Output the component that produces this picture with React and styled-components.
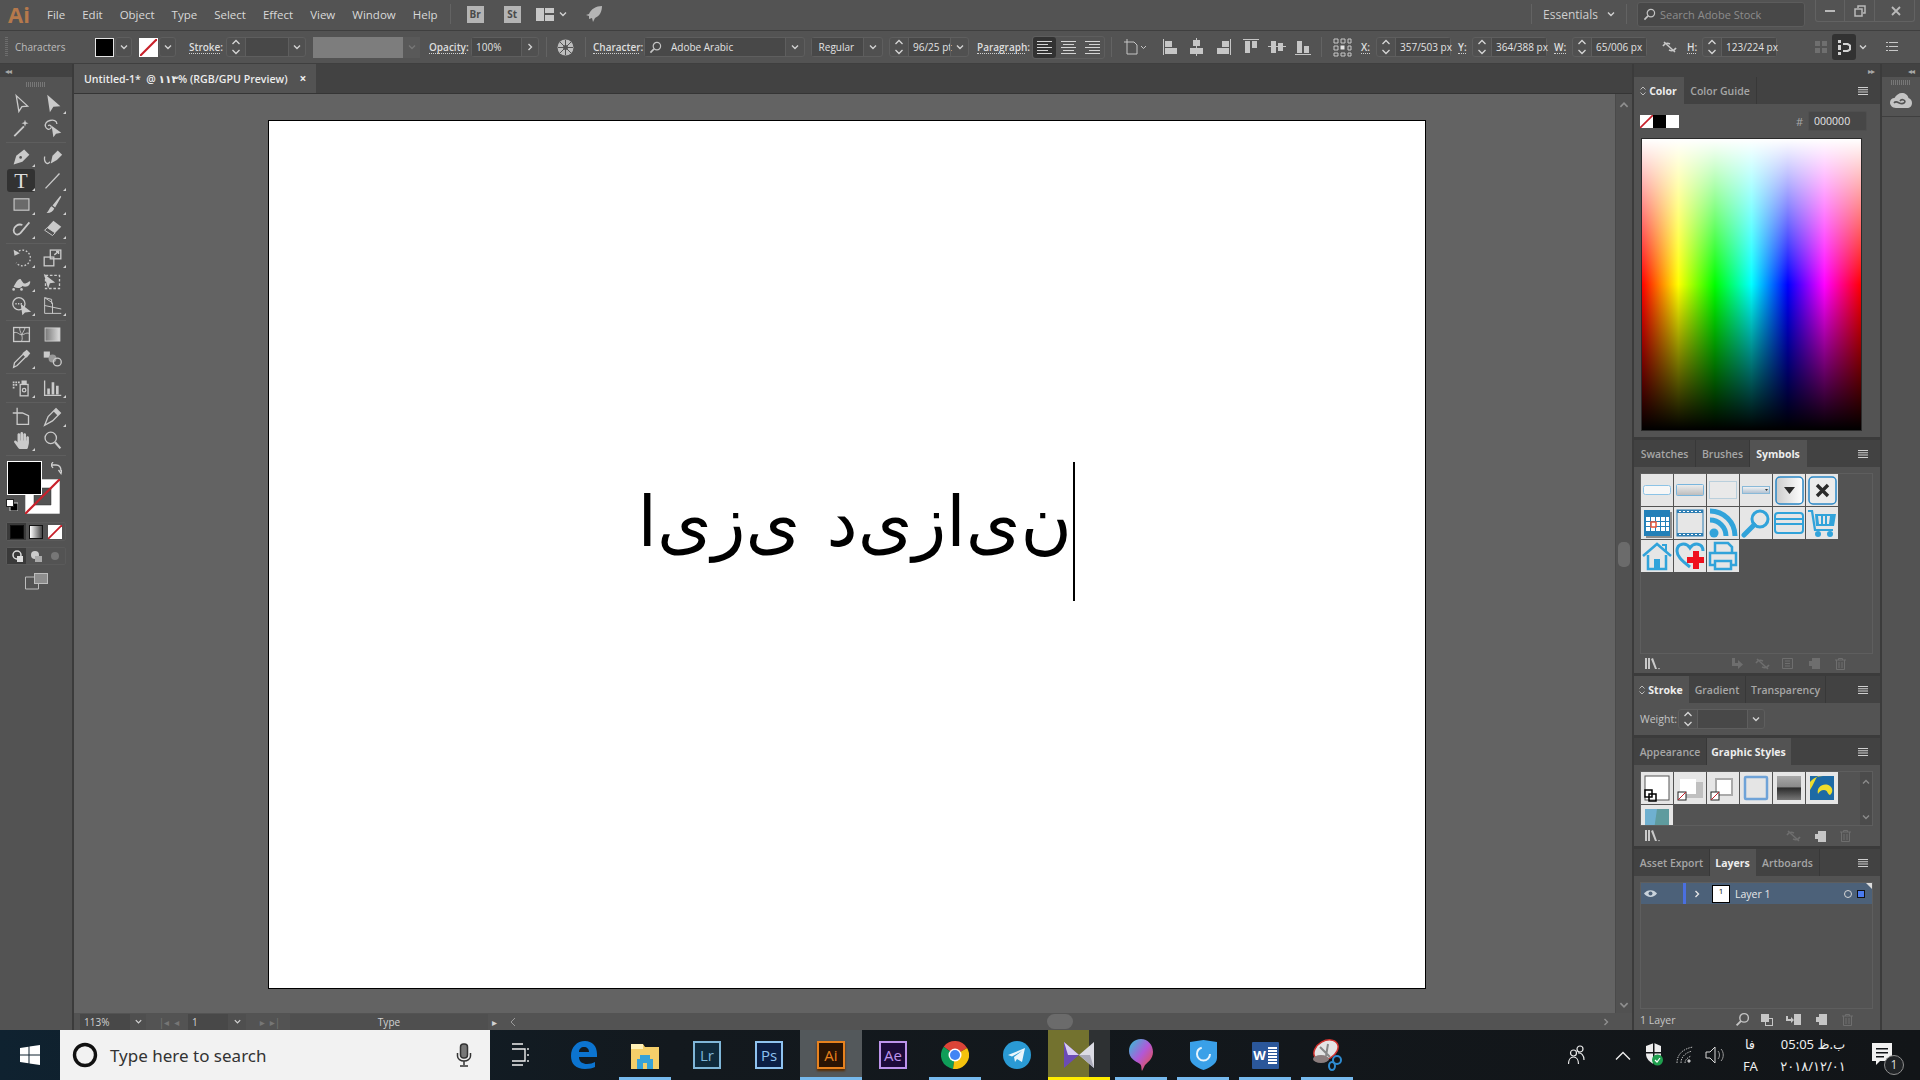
import React from 'react';
import styled, { createGlobalStyle } from 'styled-components';
import { FaHandPaper } from 'react-icons/fa';

const UI_FONT = '"Open Sans", "DejaVu Sans", sans-serif';

const GlobalStyle = createGlobalStyle`
  html, body { margin: 0; padding: 0; background: #535353; overflow: hidden; }
  * { box-sizing: border-box; }
  svg { display: block; flex: none; }
`;

const Page = styled.div`
  width: 1920px;
  height: 1080px;
  display: flex;
  flex-direction: column;
  font-family: ${UI_FONT};
  color: #d6d6d6;
  overflow: hidden;
`;

/* ---------- menu bar ---------- */
const MenuBar = styled.header`
  height: 30px;
  display: flex;
  align-items: center;
  padding-bottom: 2px;
  background: #535353;
`;
const AiLogo = styled.span`
  margin-left: 8px;
  width: 39px;
  font: 700 22px "Open Sans", sans-serif;
  color: #b5794c;
`;
const MenuList = styled.nav`
  display: flex;
  gap: 17px;
  font-size: 11.5px;
  color: #d9d9d9;
`;
const VSep = styled.div`
  width: 1px;
  height: 20px;
  margin-left: ${p => p.$ml || 0}px;
  background: #636363;
`;
const AppTile = styled.div`
  width: 17px;
  height: 17px;
  margin-left: ${p => p.$ml}px;
  background: #b4b4b4;
  color: #4a4a4a;
  font-size: 10px;
  font-weight: 700;
  display: flex;
  align-items: center;
  justify-content: center;
`;
const Workspace = styled.div`
  margin-left: auto;
  display: flex;
  align-items: center;
  height: 100%;
`;
const Essentials = styled.span`
  margin-left: 11px;
  font-size: 12px;
  color: #cfcfcf;
`;
const StockSearch = styled.div`
  width: 168px;
  height: 25px;
  margin-left: 10px;
  display: flex;
  align-items: center;
  gap: 4px;
  padding-left: 5px;
  border-radius: 3px;
  background: #484848;
  border: 1px solid #5c5c5c;
  font-size: 11px;
  color: #8d8d8d;
`;
const WinButtons = styled.div`
  margin: -6px 5px 0 10px;
  width: 100px;
  height: 22px;
  display: grid;
  grid-template-columns: 28px 30px 42px;
  border: 1px solid #626262;
  border-top: 0;
  border-radius: 0 0 3px 3px;
  color: #b9b9b9;
  & > div { display: flex; align-items: center; justify-content: center; }
  & > div + div { border-left: 1px solid #626262; }
`;

/* ---------- control bar ---------- */
const ControlBar = styled.div`
  height: 34px;
  display: flex;
  align-items: center;
  background: #535353;
  border-top: 1px solid #3f3f3f;
  border-bottom: 1px solid #3f3f3f;
  font-size: 10px;
  color: #d2d2d2;
`;
const Grip = styled.div`
  width: 3px;
  height: 20px;
  margin-left: 5px;
  background: repeating-linear-gradient(180deg, #6d6d6d 0 1px, transparent 1px 2px);
`;
const PlainLabel = styled.span`
  margin-left: ${p => p.$ml || 0}px;
  width: ${p => p.$w}px;
  white-space: nowrap;
  color: #bdbdbd;
`;
const LinkLabel = styled.span`
  margin-left: ${p => p.$ml || 0}px;
  width: ${p => p.$w}px;
  white-space: nowrap;
  line-height: 12px;
  font-weight: 600;
  color: #dedede;
  border-bottom: 1px dotted #d0d0d0;
`;
const Swatch = styled.div`
  width: 19px;
  height: 19px;
  margin-left: ${p => p.$ml || 0}px;
  background: ${p => p.$none ? '#fff' : '#000'};
  border: 1px solid ${p => p.$none ? '#fff' : '#e4e4e4'};
  overflow: hidden;
`;
const Combo = styled.div`
  display: flex;
  height: 20px;
  margin-left: ${p => p.$ml || 0}px;
  background: #505050;
  border: 1px solid #5e5e5e;
  border-radius: 3px;
`;
const ComboCell = styled.div`
  width: ${p => p.$w}px;
  height: 100%;
  display: flex;
  align-items: center;
  justify-content: ${p => p.$text ? 'flex-start' : 'center'};
  padding-left: ${p => p.$text ? 4 : 0}px;
  white-space: nowrap;
  background: ${p => p.$text ? '#484848' : 'transparent'};
  color: #e2e2e2;
  & + & { border-left: 1px solid #5e5e5e; }
`;
const FontName = styled.span`
  margin-left: 9px;
`;
const GrayField = styled.div`
  width: 90px;
  height: 21px;
  margin-left: 7px;
  background: #7d7d7d;
`;
const DisabledDrop = styled.div`
  width: 17px;
  height: 21px;
  background: #595959;
  display: flex;
  align-items: center;
  justify-content: center;
`;
const IconSlot = styled.div`
  margin-left: ${p => p.$ml || 0}px;
  width: ${p => p.$w}px;
  height: ${p => p.$h || 20}px;
  display: flex;
  align-items: center;
  justify-content: center;
  color: #c8c8c8;
  background: ${p => p.$on ? '#323232' : 'transparent'};
  border-radius: ${p => p.$on ? 3 : 0}px;
`;
const ButtonSet = styled.div`
  margin-left: ${p => p.$ml}px;
  display: flex;
  height: 23px;
  border: 1px solid #5e5e5e;
  border-radius: 3px;
`;

/* ---------- middle ---------- */
const Middle = styled.div`
  height: 966px;
  display: flex;
  background: #3b3b3b;
`;
const Toolbox = styled.aside`
  width: 72px;
  background: #535353;
  display: flex;
  flex-direction: column;
  flex: none;
`;
const CollapseStrip = styled.div`
  height: 13px;
  background: #424242;
  color: #a8a8a8;
  display: flex;
  align-items: center;
  padding: 0 ${p => p.$pad || 5}px;
  justify-content: ${p => p.$end ? 'flex-end' : 'flex-start'};
  font-size: 8px;
  letter-spacing: -1px;
`;
const HGrip = styled.div`
  width: 20px;
  height: 5px;
  margin: ${p => p.$m || '5px auto 3px'};
  background: repeating-linear-gradient(90deg, #777 0 1px, transparent 1px 2px);
`;
const ToolGroup = styled.div`
  margin: 0 6px;
  padding: 2px 0;
  display: grid;
  grid-template-columns: 31px 31px;
  grid-auto-rows: 24px;
  border-bottom: 1px solid #5e5e5e;
`;
const ToolCell = styled.div`
  position: relative;
  width: 28px;
  height: 23px;
  margin-left: 1px;
  display: flex;
  align-items: center;
  justify-content: center;
  border-radius: 3px;
  background: ${p => p.$on ? '#323232' : 'transparent'};
  color: #cacaca;
  &::after {
    content: ${p => p.$more ? "''" : 'none'};
    position: absolute;
    right: 0;
    bottom: 1px;
    border-left: 3px solid transparent;
    border-bottom: 3px solid #d0d0d0;
  }
`;
const TypeGlyph = styled.span`
  font: 400 22px "Liberation Serif", serif;
  color: #dcdcdc;
  line-height: 1;
`;
const ColorWell = styled.div`
  position: relative;
  height: 55px;
  margin-top: 5px;
`;
const FillBox = styled.div`
  position: absolute;
  left: 7px;
  top: 0;
  width: 35px;
  height: 34px;
  background: #000;
  border: 1px solid #fff;
  z-index: 1;
`;
const StrokeBox = styled.div`
  position: absolute;
  left: 25px;
  top: 18px;
  width: 35px;
  height: 35px;
`;
const SwapIcon = styled.div`
  position: absolute;
  left: 51px;
  top: 1px;
  color: #cfcfcf;
`;
const DefaultIcon = styled.div`
  position: absolute;
  left: 6px;
  top: 38px;
`;
const ModeRow = styled.div`
  height: ${p => p.$h}px;
  margin: ${p => p.$m};
  display: flex;
  border: 1px solid #5a5a5a;
  border-radius: 2px;
`;
const ModeCell = styled.div`
  flex: 1;
  display: flex;
  align-items: center;
  justify-content: center;
  background: ${p => p.$on ? '#3a3a3a' : 'transparent'};
`;
const ScreenMode = styled.div`
  margin: 8px 0 0 25px;
  color: #bdbdbd;
`;
const GradSquare = styled.div`
  width: 14px;
  height: 14px;
  border: 1px solid #111;
  background: ${p => p.$bg};
`;

const Center = styled.main`
  width: 1558px;
  margin-left: 2px;
  display: flex;
  flex-direction: column;
  flex: none;
`;
const TabBar = styled.div`
  height: 30px;
  background: #424242;
  border-bottom: 1px solid #353535;
  flex: none;
`;
const DocTab = styled.div`
  width: 242px;
  height: 29px;
  background: #535353;
  padding-left: 10px;
  display: flex;
  align-items: center;
  font-size: 10.6px;
  font-weight: 600;
  color: #ececec;
  white-space: pre;
`;
const TabClose = styled.span`
  margin-left: 12px;
  font-size: 12px;
  font-weight: 700;
`;
const CanvasRow = styled.div`
  flex: 1;
  display: flex;
  min-height: 0;
`;
const Canvas = styled.div`
  flex: 1;
  background: #636363;
  padding: 26px 0 0 194px;
`;
const Artboard = styled.div`
  width: 1158px;
  height: 869px;
  background: #fff;
  border: 1px solid #000;
  padding: 341px 0 0 371px;
`;
const TypeLine = styled.div`
  width: 435px;
  height: 139px;
  border-right: 2px solid #000;
  display: flex;
  align-items: center;
  justify-content: flex-end;
  padding: 0 1px 20px 0;
`;
const ArabicText = styled.div`
  direction: rtl;
  font: 400 70px "DejaVu Sans", sans-serif;
  word-spacing: 4px;
  white-space: nowrap;
  color: #000;
`;
const VScroll = styled.div`
  width: 17px;
  background: #515151;
  border-left: 1px solid #4a4a4a;
  padding-top: 5px;
  display: flex;
  flex-direction: column;
  align-items: center;
  color: #878787;
`;
const VThumb = styled.div`
  width: 12px;
  height: 25px;
  margin: 431px 0 432px;
  border-radius: 5px;
  background: #6b6b6b;
`;
const StatusBar = styled.footer`
  height: 17px;
  flex: none;
  display: flex;
  align-items: center;
  background: #535353;
  font-size: 10px;
  color: #cfcfcf;
`;
const StatusField = styled.div`
  width: ${p => p.$w}px;
  margin-left: ${p => p.$ml || 0}px;
  height: 16px;
  display: flex;
  align-items: center;
  padding-left: ${p => p.$pl || 0}px;
  justify-content: ${p => p.$mid ? 'center' : 'flex-start'};
  background: ${p => p.$bg || 'transparent'};
  color: ${p => p.$dim ? '#767676' : '#d2d2d2'};
`;
const HThumb = styled.div`
  width: 26px;
  height: 15px;
  margin-left: ${p => p.$ml}px;
  border-radius: 8px;
  background: #6b6b6b;
`;

/* ---------- right dock ---------- */
const Dock = styled.aside`
  flex: 1;
  display: flex;
  padding-left: 2px;
`;
const DockColumn = styled.div`
  width: 246px;
  display: flex;
  flex-direction: column;
`;
const Panel = styled.section`
  height: ${p => p.$h}px;
  margin-bottom: 3px;
  background: #535353;
  display: flex;
  flex-direction: column;
  flex: none;
  &:last-child { margin-bottom: 0; }
`;
const PanelHead = styled.div`
  height: 27px;
  display: flex;
  background: #424242;
  flex: none;
`;
const PanelTab = styled.div`
  width: ${p => p.$w}px;
  display: flex;
  align-items: center;
  justify-content: center;
  gap: 3px;
  font-size: 10.5px;
  white-space: nowrap;
  font-weight: ${p => p.$on ? 700 : 600};
  color: ${p => p.$on ? '#ededed' : '#a6a6a6'};
  background: ${p => p.$on ? '#535353' : 'transparent'};
  border-right: 1px solid ${p => p.$on ? '#535353' : '#383838'};
`;
const PanelMenu = styled.div`
  margin-left: auto;
  width: 22px;
  display: flex;
  align-items: center;
  color: #cfcfcf;
`;
const ColorTop = styled.div`
  height: 34px;
  display: flex;
  align-items: center;
  padding-left: 6px;
`;
const MiniSwatch = styled.div`
  width: 13px;
  height: 13px;
  background: ${p => p.$bg};
  overflow: hidden;
`;
const HexMark = styled.span`
  margin-left: 117px;
  font-size: 11px;
  color: #a9a9a9;
`;
const HexField = styled.div`
  width: 59px;
  height: 20px;
  margin-left: 5px;
  padding-left: 5px;
  border-radius: 2px;
  background: #474747;
  border: 1px solid #4f4f4f;
  font-size: 10.5px;
  color: #e6e6e6;
  display: flex;
  align-items: center;
`;
const Spectrum = styled.div`
  width: 221px;
  height: 293px;
  margin-left: 7px;
  border: 1px solid #2b2b2b;
  background:
    linear-gradient(180deg, #fff 0%, rgba(255, 255, 255, 0) 50%, rgba(0, 0, 0, 0) 50%, #000 100%),
    linear-gradient(90deg, #f00 0%, #ff0 16.6%, #0f0 33.3%, #0ff 50%, #00f 66.6%, #f0f 83.3%, #f00 100%);
`;
const ListBox = styled.div`
  width: 233px;
  height: ${p => p.$h}px;
  margin: ${p => p.$mt}px 0 0 6px;
  border: 1px solid #5e5e5e;
  flex: none;
  position: relative;
  overflow: hidden;
`;
const ThumbGrid = styled.div`
  display: grid;
  grid-template-columns: repeat(6, 32px);
  grid-auto-rows: 32px;
  gap: 1px;
  width: 200px;
`;
const Thumb = styled.div`
  background: #e6e6e6;
  display: flex;
  align-items: center;
  justify-content: center;
`;
const PanelFoot = styled.div`
  height: ${p => p.$h || 20}px;
  display: flex;
  align-items: center;
  padding: 0 6px 0 11px;
  color: #c6c6c6;
  font-size: 10.5px;
  flex: none;
`;
const FootIcon = styled.div`
  margin-left: ${p => p.$ml}px;
  color: ${p => p.$dim ? '#6e6e6e' : '#c6c6c6'};
`;
const WeightRow = styled.div`
  flex: 1;
  display: flex;
  align-items: center;
  padding-left: 6px;
  font-size: 10.5px;
  color: #c4c4c4;
`;
const StyleScroll = styled.div`
  position: absolute;
  right: 0;
  top: 0;
  bottom: 0;
  width: 12px;
  background: #4b4b4b;
  color: #8b8b8b;
  display: flex;
  flex-direction: column;
  justify-content: space-between;
  align-items: center;
  padding: 5px 0 3px;
`;
const LayerRow = styled.div`
  height: 21px;
  background: #4c6179;
  display: flex;
  align-items: center;
  position: relative;
  font-size: 10.5px;
  color: #e8e8e8;
  &::after {
    content: '';
    position: absolute;
    right: 0;
    top: 0;
    border-left: 6px solid transparent;
    border-top: 6px solid #dcdcdc;
  }
`;
const LayerBar = styled.div`
  width: 3px;
  height: 100%;
  margin-left: 26px;
  background: #4a6fe0;
`;
const LayerThumb = styled.div`
  width: 18px;
  height: 18px;
  margin: 0 5px 0 10px;
  background: #fff;
  border: 1px solid #000;
  color: #000;
  font-size: 8px;
  text-align: center;
  line-height: 9px;
`;
const LayerName = styled.span`
  width: 32px;
  white-space: nowrap;
`;
const LayerCount = styled.span`
  width: 34px;
  margin-left: -5px;
  white-space: nowrap;
`;
const LayerDot = styled.div`
  width: 8px;
  height: 8px;
  margin-left: 77px;
  border-radius: 50%;
  border: 1px solid #d6d6d6;
`;
const LayerSquare = styled.div`
  width: 8px;
  height: 8px;
  margin-left: 5px;
  background: #4a7bef;
  border: 1px solid #111;
`;
const IconStrip = styled.div`
  flex: 1;
  margin-left: 2px;
  background: #535353;
  display: flex;
  flex-direction: column;
`;
const StripButton = styled.div`
  height: 40px;
  display: flex;
  flex-direction: column;
  align-items: center;
  border-bottom: 1px solid #3f3f3f;
`;

/* ---------- taskbar ---------- */
const Taskbar = styled.footer`
  height: 50px;
  display: flex;
  flex: none;
  background: linear-gradient(90deg, #0f2230 0%, #13191e 35%, #121518 100%);
  color: #e8e8e8;
`;
const StartButton = styled.div`
  width: 60px;
  display: flex;
  align-items: center;
  justify-content: center;
`;
const SearchBox = styled.div`
  width: 430px;
  display: flex;
  align-items: center;
  padding-left: 12px;
  background: #f2f2f2;
  color: #333;
  font: 400 17px "Noto Sans", sans-serif;
`;
const SearchText = styled.span`
  margin-left: 12px;
  width: 346px;
`;
const TaskSlot = styled.div`
  position: relative;
  width: 62px;
  display: flex;
  align-items: center;
  justify-content: center;
  background: ${p => p.$bg || 'transparent'};
  &::after {
    content: ${p => p.$line ? "''" : 'none'};
    position: absolute;
    left: ${p => p.$full ? 0 : 5}px;
    right: ${p => p.$full ? 0 : 5}px;
    bottom: 0;
    height: 3px;
    background: ${p => p.$line};
  }
`;
const AdobeTile = styled.div`
  width: 28px;
  height: 28px;
  display: flex;
  align-items: center;
  justify-content: center;
  font: 400 15px "Open Sans", sans-serif;
  border: 2px solid ${p => p.$c};
  color: ${p => p.$c};
  background: ${p => p.$bg};
  box-shadow: ${p => p.$glow ? '0 2px 2px #5a2c00' : 'none'};
`;
const WordIcon = styled.div`
  width: 27px;
  height: 27px;
  display: flex;
  align-items: center;
  background: #2b579a;
  border-radius: 1px;
`;
const WordLetter = styled.span`
  width: 16px;
  font: 700 13px "Open Sans", sans-serif;
  color: #fff;
  text-align: center;
`;
const Tray = styled.div`
  margin-left: auto;
  display: flex;
  align-items: center;
  color: #e4e4e4;
`;
const TrayItem = styled.div`
  margin-left: ${p => p.$ml}px;
`;
const ClockColumn = styled.div`
  margin-left: ${p => p.$ml}px;
  width: ${p => p.$w}px;
  display: flex;
  flex-direction: column;
  gap: 2px;
  direction: ltr;
  font: 400 13px/20px "Noto Sans", "DejaVu Sans", sans-serif;
  color: #eee;
  white-space: nowrap;
  text-align: center;
`;
const NotifyButton = styled.div`
  position: relative;
  margin: 0 28px 0 22px;
`;
const NotifyBadge = styled.div`
  position: absolute;
  right: -12px;
  bottom: -8px;
  width: 20px;
  height: 20px;
  border-radius: 50%;
  border: 1px solid #8f8f8f;
  background: #202326;
  color: #ddd;
  font-size: 12px;
  line-height: 18px;
  text-align: center;
`;

/* ---------- small drawings ---------- */
const Chevron = ({ up, c = '#d2d2d2', s = 10 }) => (
  <svg width={s} height={s} viewBox="0 0 10 10" fill="none" stroke={c} strokeWidth="1.4">
    <path d={up ? 'M2 6.5 5 3.5 8 6.5' : 'M2 3.5 5 6.5 8 3.5'} />
  </svg>
);
const ChevronRight = ({ c = '#d2d2d2', s = 10 }) => (
  <svg width={s} height={s} viewBox="0 0 10 10" fill="none" stroke={c} strokeWidth="1.4">
    <path d="M3.5 2 6.5 5 3.5 8" />
  </svg>
);
const SpinArrows = () => (
  <svg width="10" height="16" viewBox="0 0 10 16" fill="none" stroke="#d6d6d6" strokeWidth="1.3">
    <path d="M1.5 5 5 1.5 8.5 5M1.5 11 5 14.5 8.5 11" />
  </svg>
);
const Burger = () => (
  <svg width="10" height="8" viewBox="0 0 10 8" fill="currentColor">
    <path d="M0 0h10v1H0zM0 2.3h10v1H0zM0 4.6h10v1H0zM0 7h10v1H0z" />
  </svg>
);
const NoneSlash = ({ s = 19 }) => (
  <svg width={s} height={s} viewBox="0 0 19 19">
    <rect width="19" height="19" fill="#fff" />
    <path d="M0 19 19 0" stroke="#c8202a" strokeWidth="2.4" />
  </svg>
);
const Magnifier = ({ s = 14, c = '#c4c4c4' }) => (
  <svg width={s} height={s} viewBox="0 0 14 14" fill="none" stroke={c} strokeWidth="1.3">
    <circle cx="8.5" cy="5.5" r="4" />
    <path d="M5.5 8.5 1.5 12.5" strokeWidth="1.8" />
  </svg>
);
const TextLines = ({ kind }) => {
  const rows = [0, 1, 2, 3, 4].map(i => {
    const w = i % 2 ? 11 : 15;
    const x = kind === 'left' ? 0 : kind === 'center' ? (15 - w) / 2 : 15 - w;
    return <rect key={i} x={x} y={i * 3} width={w} height="1" />;
  });
  return <svg width="15" height="13" viewBox="0 0 15 13" fill="#d4d4d4">{rows}</svg>;
};
const AlignIcon = ({ d }) => (
  <svg width="18" height="18" viewBox="0 0 18 18" fill="#c6c6c6"><path d={d} /></svg>
);

const T = ({ children, s = 21 }) => (
  <svg width={s} height={s} viewBox="0 0 24 24" fill="currentColor" stroke="none">{children}</svg>
);
const line = { fill: 'none', stroke: 'currentColor', strokeWidth: 1.5 };

const TOOLS = [
  [
    { more: false, icon: <T><path d="M6 3 19 15 12.5 15.5 9 21Z" {...line} /></T> },
    { more: true, icon: <T><path d="M6 2 21 15 13 15.8 9 22Z" /></T> },
    { more: false, icon: <T><path d="M3 21 14 10l1.5 1.5L4.5 22.5ZM16 3l1 3 3 1-3 1-1 3-1-3-3-1 3-1Z" /></T> },
    { more: false, icon: <T><path d="M17 8C17 4 13 3 9 4 5 5 3 8 4 11s4 4 6 2-1-5-3-3" {...line} /><path d="M11 10 22 18 16 19 13 23Z" /></T> },
  ],
  [
    { more: true, icon: <T><path d="M3 21 6 11 15 4 21 10 13 18Z" /><circle cx="11" cy="13" r="1.5" fill="#535353" /></T> },
    { more: false, icon: <T><path d="M3 12C2 20 7 22 9 18" {...line} /><path d="M10 20 12 11 18 5 23 10 17 16Z" /></T> },
    { more: true, on: true, icon: <TypeGlyph>T</TypeGlyph> },
    { more: true, icon: <T><path d="M4 21 20 4" {...line} /></T> },
    { more: true, icon: <T><rect x="3.5" y="5.5" width="17" height="13" fill="#6a6a6a" stroke="currentColor" strokeWidth="1.3" /></T> },
    { more: true, icon: <T><path d="M21 2 12 13l3 2.5L22 3ZM11 14l3 2.5C13 20 9 22 5 21.5 8 20 8 16 11 14Z" /></T> },
    { more: true, icon: <T><path d="M21 5 11 17C7 21 3 18 3 14s5-8 10-6" {...line} strokeWidth="2" /></T> },
    { more: true, icon: <T><path d="M13 3 22 10 12 20 3 14Z" /><path d="M3 14 12 20 15 17 6 11Z" fill="#535353" stroke="currentColor" /></T> },
  ],
  [
    { more: true, icon: <T><path d="M6 7a9 9 0 1 1 0 11" {...line} strokeDasharray="2 2" /><path d="M3 3 4 10 10 7Z" /></T> },
    { more: true, icon: <T><rect x="2.5" y="11.5" width="11" height="10" {...line} /><rect x="9.5" y="3.5" width="12" height="10" {...line} /><path d="M14 9 19 5M16 5h3v3" {...line} /></T> },
    { more: true, icon: <T><path d="M3 18C6 12 8 9 11 9c2 3 3 6 6 5s4-3 5-2c0 6-6 7-9 5-2 3-6 3-10 1Z" /><circle cx="3" cy="21" r="1.5" /><circle cx="12" cy="21" r="1.5" /></T> },
    { more: false, icon: <T><path d="M4 5H20V20H4Z" {...line} strokeDasharray="3 2" /><path d="M2 3 15 13 9 14 7 20Z" /></T> },
    { more: true, icon: <T><circle cx="9" cy="10" r="7" {...line} /><path d="M5 10h8" {...line} strokeDasharray="1.5 1.5" /><path d="M11 10 23 19 16 20 13 23Z" /></T> },
    { more: true, icon: <T><path d="M3 3V21H22M3 3 12 9V21M3 12l19 4M3 3l8 2 0 5" {...line} strokeWidth="1.1" /></T> },
  ],
  [
    { more: false, icon: <T><rect x="3" y="4" width="18" height="16" {...line} /><path d="M3 10C8 8 10 14 14 12s5-2 7-1M10 4c-1 5 5 9 2 16M16 4c0 3-3 5-3 8" {...line} strokeWidth="1" /></T> },
    { more: false, icon: <svg width="21" height="21" viewBox="0 0 24 24"><defs><linearGradient id="tg"><stop offset="0" stopColor="#777" /><stop offset="1" stopColor="#ddd" /></linearGradient></defs><rect x="3.5" y="4.5" width="17" height="15" fill="url(#tg)" stroke="#cfcfcf" /></svg> },
    { more: true, icon: <T><path d="M3 22 4 17 14 7l3 3L7 20Z" {...line} /><path d="M13 6 18 2l4 4-4 5Z" /></T> },
    { more: false, icon: <T><rect x="2" y="4" width="7" height="7" /><circle cx="12" cy="12" r="4.5" fill="#999" /><circle cx="17.5" cy="16" r="4.5" {...line} /></T> },
  ],
  [
    { more: true, icon: <T><path d="M2 5h2v2H2zM5 5h2v2H5zM8 5h2v2H8zM2 8h2v2H2zM5 8h2v2H5zM2 11h2v2H2z" /><rect x="10.5" y="8.5" width="9" height="13" {...line} /><rect x="12" y="4" width="6" height="4" /><circle cx="15" cy="15" r="2" {...line} /></T> },
    { more: true, icon: <T><path d="M3 4V21H22" {...line} /><path d="M6 13h3v7H6zM11 6h3v14h-3zM16 10h3v10h-3z" /></T> },
  ],
  [
    { more: false, icon: <T><path d="M7 2V8M2 8H13L20 11V21H7V8" {...line} /></T> },
    { more: true, icon: <T><path d="M3 22 7 12 16 3 21 8 12 17Z" {...line} /><path d="M16 3 21 8 18 11 13 6Z" /></T> },
    { more: true, icon: <FaHandPaper size={17} /> },
    { more: false, icon: <T><circle cx="10" cy="9" r="6.5" {...line} /><path d="M15 14 21 21" {...line} strokeWidth="2.5" /></T> },
  ],
];

const SYMBOLS = [
  <svg width="28" height="10" viewBox="0 0 28 10"><rect x=".5" y=".5" width="27" height="9" rx="2" fill="#f7f7f7" stroke="#8cc3e6" /></svg>,
  <svg width="28" height="12" viewBox="0 0 28 12"><defs><linearGradient id="g1" x2="0" y2="1"><stop offset="0" stopColor="#eee" /><stop offset="1" stopColor="#bbb" /></linearGradient></defs><rect x=".5" y=".5" width="27" height="11" rx="1" fill="url(#g1)" stroke="#78b5dd" /></svg>,
  <svg width="28" height="18" viewBox="0 0 28 18"><rect x=".5" y=".5" width="27" height="17" fill="#e9e9e9" stroke="#b9cfdc" /></svg>,
  <svg width="28" height="8" viewBox="0 0 28 8"><defs><linearGradient id="g2" x2="0" y2="1"><stop offset="0" stopColor="#f5f5f5" /><stop offset="1" stopColor="#aebfd0" /></linearGradient></defs><rect x=".5" y=".5" width="27" height="7" fill="url(#g2)" stroke="#89b9d8" /><path d="M23 3h3l-1.5 2Z" fill="#333" /></svg>,
  <svg width="29" height="29" viewBox="0 0 29 29"><defs><linearGradient id="g3"><stop offset="0" stopColor="#ccc" /><stop offset="1" stopColor="#fff" /></linearGradient></defs><rect x="1" y="1" width="27" height="27" rx="4" fill="url(#g3)" stroke="#2b88c6" strokeWidth="1.5" /><path d="M9 11H20L14.5 18Z" fill="#2b2b2b" /></svg>,
  <svg width="29" height="29" viewBox="0 0 29 29"><rect x="1" y="1" width="27" height="27" rx="4" fill="#ececec" stroke="#2b88c6" strokeWidth="1.5" /><path d="M9 9 20 20M20 9 9 20" stroke="#2b2b2b" strokeWidth="3.4" /></svg>,
  <svg width="29" height="29" viewBox="0 0 29 29"><rect x="3" y="3" width="26" height="26" fill="#8d8d8d" /><rect x="1" y="1" width="26" height="26" fill="#2380b8" /><path d="M3 8h4v4H3zM8 8h4v4H8zM13 8h4v4h-4zM18 8h4v4h-4zM23 8h3v4h-3zM3 13h4v4H3zM13 13h4v4h-4zM18 13h4v4h-4zM23 13h3v4h-3zM3 18h4v4H3zM8 18h4v4H8zM13 18h4v4h-4zM18 18h4v4h-4zM23 18h3v4h-3z" fill="#fff" /><rect x="8" y="13" width="5" height="5" fill="#fff" stroke="#e8563a" strokeWidth="1.5" /></svg>,
  <svg width="28" height="28" viewBox="0 0 28 28"><rect x="1" y="1" width="26" height="26" fill="#e6e6e6" stroke="#2f7fb4" strokeWidth="1" /><path d="M1 1h26v3H1zM1 24h26v3H1z" fill="#2f7fb4" /><path d="M3 2h2v1H3zM7 2h2v1H7zM11 2h2v1h-2zM15 2h2v1h-2zM19 2h2v1h-2zM23 2h2v1h-2zM3 25h2v1H3zM7 25h2v1H7zM11 25h2v1h-2zM15 25h2v1h-2zM19 25h2v1h-2zM23 25h2v1h-2z" fill="#fff" /></svg>,
  <svg width="30" height="30" viewBox="0 0 30 30" fill="none" stroke="#31a3da"><circle cx="6" cy="25" r="4.5" fill="#31a3da" stroke="none" /><path d="M2 12a16 16 0 0 1 16 16" strokeWidth="5" /><path d="M2 3a25 25 0 0 1 25 25" strokeWidth="5" /></svg>,
  <svg width="30" height="30" viewBox="0 0 30 30" fill="none" stroke="#31a3da"><circle cx="19" cy="11" r="8" strokeWidth="3" /><path d="M13 17 3 27" strokeWidth="5" strokeLinecap="round" /></svg>,
  <svg width="30" height="22" viewBox="0 0 30 22" fill="none" stroke="#31a3da" strokeWidth="2"><rect x="1" y="1" width="28" height="20" rx="3" /><path d="M1 7h28M1 12h28" /></svg>,
  <svg width="30" height="30" viewBox="0 0 30 30" fill="#31a3da"><path d="M1 2h5l3 19h17v2H7L4 4H1Z" /><path d="M8 6h21l-2 12H9Zm3 2 1 8h2V8Zm5 0v8h2V8Zm4 0v8h2l1-8Z" fillRule="evenodd" /><circle cx="11" cy="26" r="3" /><circle cx="23" cy="26" r="3" /></svg>,
  <svg width="30" height="30" viewBox="0 0 30 30" fill="none" stroke="#31a3da"><path d="M1 15 15 3 29 15" strokeWidth="2.5" /><path d="M20 4h4v6" strokeWidth="2" /><path d="M6 14v14h18V14" strokeWidth="2.5" /><rect x="12" y="18" width="6" height="9" fill="#31a3da" stroke="none" /></svg>,
  <svg width="30" height="30" viewBox="0 0 30 30" fill="none"><path d="M15 26C6 19 2 15 2 10c0-8 9-9 13-3 4-6 13-5 13 3" stroke="#31a3da" strokeWidth="3" /><path d="M18 10h6v6h5v6h-5v6h-6v-6h-6v-6h6Z" fill="#ef0f1c" /></svg>,
  <svg width="30" height="30" viewBox="0 0 30 30" fill="none" stroke="#31a3da" strokeWidth="2.5"><path d="M7 12V2h13l4 4v6" /><path d="M7 24H2V12h26v12h-5" /><rect x="7" y="20" width="16" height="8" /></svg>,
];

const STYLES = [
  <svg width="32" height="32" viewBox="0 0 32 32"><rect x="4" y="4" width="24" height="24" fill="#fff" stroke="#555" /><rect x="4" y="18" width="7" height="7" fill="#fff" stroke="#000" strokeWidth="1.5" /><rect x="8" y="22" width="7" height="7" fill="none" stroke="#000" strokeWidth="1.5" /></svg>,
  <svg width="32" height="32" viewBox="0 0 32 32"><rect x="12" y="10" width="17" height="16" fill="#999" opacity=".5" /><rect x="6" y="7" width="16" height="15" fill="#fff" /><rect x="4" y="20" width="8" height="8" fill="#fff" stroke="#222" /><path d="M4 28 12 20" stroke="#c8202a" /></svg>,
  <svg width="32" height="32" viewBox="0 0 32 32"><rect x="9" y="7" width="16" height="16" fill="#fff" stroke="#aaa" strokeWidth="2" /><rect x="4" y="20" width="8" height="8" fill="#fff" stroke="#222" /><path d="M4 28 12 20" stroke="#c8202a" /></svg>,
  <svg width="32" height="32" viewBox="0 0 32 32"><rect x="5" y="5" width="22" height="22" rx="1" fill="#e5e5e5" stroke="#6fa3d8" strokeWidth="2.5" /></svg>,
  <svg width="32" height="32" viewBox="0 0 32 32"><defs><linearGradient id="g4" x2="0" y2="1"><stop offset="0" stopColor="#a8a8a8" /><stop offset=".45" stopColor="#8a8a8a" /><stop offset=".5" stopColor="#2c2c2c" /><stop offset="1" stopColor="#777" /></linearGradient></defs><rect x="4" y="4" width="24" height="24" fill="url(#g4)" /></svg>,
  <svg width="32" height="32" viewBox="0 0 32 32"><rect x="4" y="4" width="24" height="24" fill="#1d6aa5" /><path d="M4 10C10 3 16 4 24 4H12C9 7 8 12 4 18ZM12 22c-2-7 6-12 12-8 3 2 3 7 0 9-3-1-2-5-6-5-3 0-5 2-6 4Z" fill="#eedd2c" /></svg>,
  <svg width="32" height="32" viewBox="0 0 32 32"><rect x="4" y="4" width="24" height="28" fill="#6fb0d0" /><path d="M16 4h12v28H12Z" fill="#5f9b9e" /></svg>,
];

function ToolPalette() {
  return TOOLS.map((group, i) => (
    <ToolGroup key={i}>
      {group.map((tool, j) => (
        <ToolCell key={j} $on={tool.on} $more={tool.more}>{tool.icon}</ToolCell>
      ))}
    </ToolGroup>
  ));
}

function PanelHeader({ tabs }) {
  return (
    <PanelHead>
      {tabs.map(tab => (
        <PanelTab key={tab.label} $w={tab.w} $on={tab.on}>
          {tab.updown && <svg width="6" height="10" viewBox="0 0 6 10" fill="none" stroke="#bbb"><path d="M.5 3.5 3 1l2.5 2.5M.5 6.5 3 9l2.5-2.5" /></svg>}
          {tab.label}
        </PanelTab>
      ))}
      <PanelMenu><Burger /></PanelMenu>
    </PanelHead>
  );
}

const LibIcon = () => (
  <svg width="16" height="12" viewBox="0 0 16 12" fill="#c9c9c9"><path d="M0 0h2v11H0zM3 0h2v11H3zM6 1 8 0l4 11h-2Z" /><path d="M13 10h2l-1 1.5Z" /></svg>
);
const TrashIcon = () => (
  <svg width="11" height="12" viewBox="0 0 11 12" fill="none" stroke="currentColor"><path d="M0 2h11M3.5 2V.5h4V2M1.5 2v9.5h8V2M4 4v6M7 4v6" /></svg>
);
const NewIcon = () => (
  <svg width="11" height="11" viewBox="0 0 11 11" fill="currentColor"><path d="M0 3h3V0h8v11H3V8H0Z" /></svg>
);
const BreakIcon = () => (
  <svg width="15" height="12" viewBox="0 0 15 12" fill="none" stroke="currentColor" strokeWidth="1.6"><path d="M1 5C3 2 6 2 8 3M14 7c-2 3-5 3-7 2M2 1l11 10" /></svg>
);

const ALIGN = [
  'M1 1h1v16H1zM3 3h7v6H3zM3 10h12v6H3z',
  'M8 0h1v18H8zM5 2h7v6H5zM2 10h13v6H2z',
  'M16 1h1v16h-1zM8 3h7v6H8zM3 10h12v6H3z',
  'M1 1h16v1H1zM3 3h5v12H3zM10 3h5v7h-5z',
  'M0 8h18v1H0zM3 3h5v12H3zM10 5h5v8h-5z',
  'M1 16h16v1H1zM3 3h5v12H3zM10 8h5v7h-5z',
];

export default function App() {
  return (
    <Page>
      <GlobalStyle />
      <MenuBar>
        <AiLogo>Ai</AiLogo>
        <MenuList>
          {['File', 'Edit', 'Object', 'Type', 'Select', 'Effect', 'View', 'Window', 'Help'].map(m => <span key={m}>{m}</span>)}
        </MenuList>
        <VSep $ml={12} />
        <AppTile $ml={16}>Br</AppTile>
        <AppTile $ml={20}>St</AppTile>
        <IconSlot $ml={15} $w={18} $h={14}>
          <svg width="18" height="13" viewBox="0 0 18 13" fill="#c8c8c8"><path d="M0 0h8v13H0zM9 0h9v5H9zM9 7h9v6H9z" /></svg>
        </IconSlot>
        <IconSlot $ml={3} $w={12}><Chevron /></IconSlot>
        <IconSlot $ml={16} $w={18}>
          <svg width="18" height="18" viewBox="0 0 18 18" fill="#b5b5b5"><path d="M17 1C11 1 6 4 4 9l-3 1 3 1v3l3-1 1 4 2-4c5-2 7-7 7-12Z" /></svg>
        </IconSlot>
        <Workspace>
          <VSep />
          <Essentials>Essentials</Essentials>
          <IconSlot $ml={8} $w={10}><Chevron /></IconSlot>
          <VSep $ml={10} />
          <StockSearch><Magnifier s={13} />Search Adobe Stock</StockSearch>
          <WinButtons>
            <div><svg width="10" height="2"><rect width="10" height="2" fill="#b9b9b9" /></svg></div>
            <div><svg width="12" height="12" viewBox="0 0 12 12" fill="none" stroke="#b9b9b9" strokeWidth="1.5"><path d="M4 3V1h7v7H9M1 4h7v7H1z" /></svg></div>
            <div><svg width="10" height="10" viewBox="0 0 10 10" stroke="#b9b9b9" strokeWidth="1.8"><path d="M1 1 9 9M9 1 1 9" /></svg></div>
          </WinButtons>
        </Workspace>
      </MenuBar>

      <ControlBar>
        <Grip />
        <PlainLabel $ml={7} $w={47}>Characters</PlainLabel>
        <Swatch $ml={33} />
        <Combo $ml={1}><ComboCell $w={15}><Chevron /></ComboCell></Combo>
        <Swatch $ml={7} $none><NoneSlash s={17} /></Swatch>
        <Combo $ml={1}><ComboCell $w={15}><Chevron /></ComboCell></Combo>
        <LinkLabel $ml={13} $w={31}>Stroke:</LinkLabel>
        <Combo $ml={6}>
          <ComboCell $w={18}><SpinArrows /></ComboCell>
          <ComboCell $w={43} $text />
          <ComboCell $w={17}><Chevron /></ComboCell>
        </Combo>
        <GrayField />
        <DisabledDrop><Chevron c="#777" /></DisabledDrop>
        <LinkLabel $ml={9} $w={37}>Opacity:</LinkLabel>
        <Combo $ml={5}>
          <ComboCell $w={49} $text>100%</ComboCell>
          <ComboCell $w={17}><ChevronRight /></ComboCell>
        </Combo>
        <VSep $ml={7} />
        <IconSlot $ml={10} $w={17}>
          <svg width="17" height="17" viewBox="0 0 17 17" fill="#bdbdbd"><circle cx="8.5" cy="8.5" r="8" /><path d="M8.5 1v15M1 8.5h15M3 3l11 11M14 3 3 14" stroke="#535353" /><circle cx="8.5" cy="8.5" r="2.5" fill="#535353" /></svg>
        </IconSlot>
        <VSep $ml={11} />
        <LinkLabel $ml={7} $w={46}>Character:</LinkLabel>
        <Combo $ml={5}>
          <ComboCell $w={140} $text><Magnifier s={13} /><FontName>Adobe Arabic</FontName></ComboCell>
          <ComboCell $w={19}><Chevron /></ComboCell>
        </Combo>
        <Combo $ml={6}>
          <ComboCell $w={51} $text>&nbsp;Regular</ComboCell>
          <ComboCell $w={19}><Chevron /></ComboCell>
        </Combo>
        <Combo $ml={6}>
          <ComboCell $w={18}><SpinArrows /></ComboCell>
          <ComboCell $w={42} $text>96/25 pt</ComboCell>
          <ComboCell $w={18}><Chevron /></ComboCell>
        </Combo>
        <LinkLabel $ml={8} $w={48}>Paragraph:</LinkLabel>
        <ButtonSet $ml={7}>
          <IconSlot $w={23} $h={21} $on><TextLines kind="left" /></IconSlot>
          <IconSlot $w={25} $h={21}><TextLines kind="center" /></IconSlot>
          <IconSlot $w={23} $h={21}><TextLines kind="right" /></IconSlot>
        </ButtonSet>
        <VSep $ml={6} />
        <IconSlot $ml={11} $w={25}>
          <svg width="25" height="16" viewBox="0 0 25 16" fill="none" stroke="#c6c6c6"><path d="M1 3h3M4 0v3M4 3h7l3 3v9H4zM18 7l2.5 2.5L23 7" /></svg>
        </IconSlot>
        <IconSlot $ml={14} $w={18}><AlignIcon d={ALIGN[0]} /></IconSlot>
        <IconSlot $ml={8} $w={18}><AlignIcon d={ALIGN[1]} /></IconSlot>
        <IconSlot $ml={8} $w={18}><AlignIcon d={ALIGN[2]} /></IconSlot>
        <IconSlot $ml={10} $w={18}><AlignIcon d={ALIGN[3]} /></IconSlot>
        <IconSlot $ml={8} $w={18}><AlignIcon d={ALIGN[4]} /></IconSlot>
        <IconSlot $ml={8} $w={18}><AlignIcon d={ALIGN[5]} /></IconSlot>
        <VSep $ml={9} />
        <IconSlot $ml={10} $w={20}>
          <svg width="19" height="19" viewBox="0 0 19 19" fill="none" stroke="#c8c8c8"><path d="M1 1h4v4H1zM8 1h4v4H8zM15 1h3v4h-3zM1 8h4v4H1zM15 8h3v4h-3zM1 15h4v3H1zM8 15h4v3H8zM15 15h3v3h-3z" /><rect x="7.5" y="7.5" width="4" height="4" fill="#e4e4e4" stroke="none" /></svg>
        </IconSlot>
        <LinkLabel $ml={9} $w={9}>X:</LinkLabel>
        <Combo $ml={6}>
          <ComboCell $w={18}><SpinArrows /></ComboCell>
          <ComboCell $w={55} $text>357/503 px</ComboCell>
        </Combo>
        <LinkLabel $ml={7} $w={8}>Y:</LinkLabel>
        <Combo $ml={6}>
          <ComboCell $w={18}><SpinArrows /></ComboCell>
          <ComboCell $w={55} $text>364/388 px</ComboCell>
        </Combo>
        <LinkLabel $ml={7} $w={12}>W:</LinkLabel>
        <Combo $ml={6}>
          <ComboCell $w={18}><SpinArrows /></ComboCell>
          <ComboCell $w={55} $text>65/006 px</ComboCell>
        </Combo>
        <IconSlot $ml={14} $w={16}><BreakIcon /></IconSlot>
        <LinkLabel $ml={10} $w={9}>H:</LinkLabel>
        <Combo $ml={6}>
          <ComboCell $w={18}><SpinArrows /></ComboCell>
          <ComboCell $w={55} $text>123/224 px</ComboCell>
        </Combo>
        <IconSlot $ml={36} $w={15}>
          <svg width="12" height="12" viewBox="0 0 12 12" fill="#6f6f6f"><path d="M0 0h5v5H0zM7 0h5v5H7zM0 7h5v5H0zM7 7h5v5H7z" /></svg>
        </IconSlot>
        <IconSlot $ml={4} $w={24} $h={26} $on>
          <svg width="13" height="15" viewBox="0 0 13 15" fill="#d4d4d4"><path d="M0 0h3v3H0zM0 5h3v5H0zM0 12h3v3H0zM5 3h5l3 2v5l-3 2H5v-2h4l2-1V6L9 5H5z" /></svg>
        </IconSlot>
        <IconSlot $w={14}><Chevron /></IconSlot>
        <IconSlot $ml={15} $w={14}>
          <svg width="12" height="10" viewBox="0 0 12 10" fill="#c8c8c8"><path d="M0 0h2v1H0zM3 0h9v1H3zM0 4h2v1H0zM3 4h9v1H3zM0 8h2v1H0zM3 8h9v1H3z" /></svg>
        </IconSlot>
      </ControlBar>

      <Middle>
        <Toolbox>
          <CollapseStrip>◂◂</CollapseStrip>
          <HGrip />
          <ToolPalette />
          <ColorWell>
            <FillBox />
            <StrokeBox>
              <svg width="35" height="35" viewBox="0 0 35 35">
                <path d="M0 0H35V35H0ZM9 9V26H26V9Z" fill="#fff" fillRule="evenodd" stroke="#333" strokeWidth=".5" />
                <path d="M0 35 35 0" stroke="#c8202a" strokeWidth="2.2" />
              </svg>
            </StrokeBox>
            <SwapIcon>
              <svg width="11" height="13" viewBox="0 0 11 13" fill="none" stroke="currentColor" strokeWidth="1.3"><path d="M0 3h5c3 0 5 2 5 6M2 0 0 3l2 3M7.5 8 10 11.5 11 8" /></svg>
            </SwapIcon>
            <DefaultIcon>
              <svg width="12" height="12" viewBox="0 0 12 12"><rect x="4" y="4" width="8" height="8" fill="#000" stroke="#ccc" /><rect x="0.5" y="0.5" width="7" height="7" fill="#fff" stroke="#222" /></svg>
            </DefaultIcon>
          </ColorWell>
          <ModeRow $h={19} $m="6px 6px 0">
            <ModeCell $on><GradSquare $bg="#000" /></ModeCell>
            <ModeCell><GradSquare $bg="linear-gradient(90deg, #fff, #444)" /></ModeCell>
            <ModeCell><NoneSlash s={14} /></ModeCell>
          </ModeRow>
          <ModeRow $h={18} $m="6px 6px 0">
            <ModeCell $on><svg width="12" height="12" viewBox="0 0 12 12"><circle cx="6" cy="5" r="4" fill="none" stroke="#ddd" strokeWidth="1.5" /><rect x="6" y="6" width="6" height="6" fill="#ddd" /></svg></ModeCell>
            <ModeCell><svg width="12" height="12" viewBox="0 0 12 12"><circle cx="5" cy="5" r="4" fill="#ccc" /><rect x="5" y="6" width="7" height="6" fill="#aaa" /></svg></ModeCell>
            <ModeCell><svg width="10" height="10" viewBox="0 0 10 10"><circle cx="5" cy="5" r="4" fill="#777" /></svg></ModeCell>
          </ModeRow>
          <ScreenMode>
            <svg width="23" height="17" viewBox="0 0 23 17" fill="none" stroke="#bdbdbd"><rect x="9.5" y=".5" width="13" height="10" fill="#8e8e8e" /><path d="M9 4H.5v12h13v-5" /></svg>
          </ScreenMode>
        </Toolbox>

        <Center>
          <TabBar>
            <DocTab>
              Untitled-1*  @ ۱۱۳% (RGB/GPU Preview)
              <TabClose>×</TabClose>
            </DocTab>
          </TabBar>
          <CanvasRow>
            <Canvas>
              <Artboard>
                <TypeLine>
                  <ArabicText>ن‌ی‌ا‌ز‌ی‌د ی‌ز‌ی‌ا</ArabicText>
                </TypeLine>
              </Artboard>
            </Canvas>
            <VScroll>
              <Chevron up c="#8f8f8f" s={12} />
              <VThumb />
              <Chevron c="#8f8f8f" s={12} />
            </VScroll>
          </CanvasRow>
          <StatusBar>
            <StatusField $w={6} />
            <StatusField $w={50} $bg="#484848" $pl={4}>113%</StatusField>
            <StatusField $w={16} $mid $bg="#4f4f4f"><Chevron s={9} /></StatusField>
            <StatusField $w={38} $ml={4} $dim $mid>|◂&nbsp;&nbsp;◂</StatusField>
            <StatusField $w={40} $bg="#484848" $pl={4}>1</StatusField>
            <StatusField $w={18} $mid $bg="#4f4f4f"><Chevron s={9} /></StatusField>
            <StatusField $w={36} $ml={6} $dim $mid>▸&nbsp;&nbsp;▸|</StatusField>
            <StatusField $w={198} $ml={2} $mid $bg="#4f4f4f">Type</StatusField>
            <StatusField $w={9} $ml={2} $mid>▸</StatusField>
            <StatusField $w={12} $ml={8} $mid $dim><svg width="8" height="10" viewBox="0 0 8 10" fill="none" stroke="#9a9a9a"><path d="M6 1 2 5l4 4" /></svg></StatusField>
            <HThumb $ml={528} />
            <StatusField $w={12} $ml={527} $mid><ChevronRight c="#8f8f8f" /></StatusField>
          </StatusBar>
        </Center>

        <Dock>
          <DockColumn>
            <CollapseStrip $end $pad={6}>▸▸</CollapseStrip>
            <Panel $h={360}>
              <PanelHeader tabs={[{ label: 'Color', w: 50, on: true, updown: true }, { label: 'Color Guide', w: 73 }]} />
              <ColorTop>
                <MiniSwatch $bg="#fff"><NoneSlash s={13} /></MiniSwatch>
                <MiniSwatch $bg="#000" />
                <MiniSwatch $bg="#fff" />
                <HexMark>#</HexMark>
                <HexField>000000</HexField>
              </ColorTop>
              <Spectrum />
            </Panel>
            <Panel $h={233}>
              <PanelHeader tabs={[{ label: 'Swatches', w: 62 }, { label: 'Brushes', w: 54 }, { label: 'Symbols', w: 57, on: true }]} />
              <ListBox $h={181} $mt={6}>
                <ThumbGrid>{SYMBOLS.map((s, i) => <Thumb key={i}>{s}</Thumb>)}</ThumbGrid>
              </ListBox>
              <PanelFoot $h={19}>
                <LibIcon />
                <FootIcon $ml={71} $dim><svg width="11" height="11" viewBox="0 0 11 11" fill="currentColor"><path d="M0 0h3v5h3V2l5 4.5L6 11V8H0Z" /></svg></FootIcon>
                <FootIcon $ml={12} $dim><BreakIcon /></FootIcon>
                <FootIcon $ml={12} $dim><svg width="11" height="11" viewBox="0 0 11 11" fill="none" stroke="currentColor"><path d="M.5.5h10v10H.5zM3 3h5M3 5.5h5M3 8h5" /></svg></FootIcon>
                <FootIcon $ml={16} $dim><NewIcon /></FootIcon>
                <FootIcon $ml={15} $dim><TrashIcon /></FootIcon>
              </PanelFoot>
            </Panel>
            <Panel $h={59}>
              <PanelHeader tabs={[{ label: 'Stroke', w: 55, on: true, updown: true }, { label: 'Gradient', w: 57 }, { label: 'Transparency', w: 80 }]} />
              <WeightRow>
                Weight:
                <Combo $ml={1}>
                  <ComboCell $w={18}><SpinArrows /></ComboCell>
                  <ComboCell $w={50} $text />
                  <ComboCell $w={17}><Chevron /></ComboCell>
                </Combo>
              </WeightRow>
            </Panel>
            <Panel $h={108}>
              <PanelHeader tabs={[{ label: 'Appearance', w: 73 }, { label: 'Graphic Styles', w: 84, on: true }]} />
              <ListBox $h={55} $mt={6}>
                <ThumbGrid>{STYLES.map((s, i) => <Thumb key={i}>{s}</Thumb>)}</ThumbGrid>
                <StyleScroll><Chevron up c="#8b8b8b" /><Chevron c="#8b8b8b" /></StyleScroll>
              </ListBox>
              <PanelFoot>
                <LibIcon />
                <FootIcon $ml={125} $dim><BreakIcon /></FootIcon>
                <FootIcon $ml={14}><NewIcon /></FootIcon>
                <FootIcon $ml={14} $dim><TrashIcon /></FootIcon>
              </PanelFoot>
            </Panel>
            <Panel $h={181}>
              <PanelHeader tabs={[{ label: 'Asset Export', w: 76 }, { label: 'Layers', w: 46, on: true }, { label: 'Artboards', w: 64 }]} />
              <ListBox $h={127} $mt={6}>
                <LayerRow>
                  <IconSlot $ml={2} $w={14} $h={12}>
                    <svg width="13" height="9" viewBox="0 0 13 9"><path d="M0 4.5C3 0 10 0 13 4.5 10 9 3 9 0 4.5Z" fill="#c9d3dc" /><circle cx="6.5" cy="4.5" r="2" fill="#4c6179" /></svg>
                  </IconSlot>
                  <LayerBar />
                  <IconSlot $ml={6} $w={10} $h={12}><ChevronRight c="#e4e4e4" /></IconSlot>
                  <LayerThumb>1</LayerThumb>
                  <LayerName>Layer 1</LayerName>
                  <LayerDot />
                  <LayerSquare />
                </LayerRow>
              </ListBox>
              <PanelFoot $h={21}>
                <LayerCount>1 Layer</LayerCount>
                <FootIcon $ml={61}><Magnifier s={15} /></FootIcon>
                <FootIcon $ml={11}><svg width="12" height="12" viewBox="0 0 12 12" fill="none" stroke="currentColor"><rect x="4.5" y="4.5" width="7" height="7" /><rect x=".5" y=".5" width="7" height="7" fill="currentColor" /></svg></FootIcon>
                <FootIcon $ml={13}><svg width="15" height="12" viewBox="0 0 15 12" fill="currentColor"><path d="M8 0h7v11H8ZM0 2h2v3h3V3l3 3-3 3V7H0Z" /></svg></FootIcon>
                <FootIcon $ml={15}><NewIcon /></FootIcon>
                <FootIcon $ml={15} $dim><TrashIcon /></FootIcon>
              </PanelFoot>
            </Panel>
          </DockColumn>
          <IconStrip>
            <CollapseStrip $end $pad={6}>◂◂</CollapseStrip>
            <StripButton>
              <HGrip $m="3px auto 8px" />
              <svg width="22" height="15" viewBox="0 0 22 15">
                <path d="M6 15C2 15 0 12 0 9.5 0 7 2 5 4.5 5 6 2 9 0 12 0c3 0 6 2 6.5 5 2 .5 3.5 2.5 3.5 5 0 3-2 5-5 5Z" fill="#c4c4c4" />
                <path d="M4 10c3-4 6 3 10 0 3-2-2-5-4-2" fill="none" stroke="#535353" strokeWidth="1.6" />
              </svg>
            </StripButton>
          </IconStrip>
        </Dock>
      </Middle>

      <Taskbar>
        <StartButton>
          <svg width="20" height="20" viewBox="0 0 20 20" fill="#fff"><path d="M0 3 8.5 1.8V9.5H0ZM9.5 1.6 20 0V9.5H9.5ZM0 10.5H8.5V18.2L0 17ZM9.5 10.5H20V20L9.5 18.4Z" /></svg>
        </StartButton>
        <SearchBox>
          <svg width="26" height="26" viewBox="0 0 26 26" fill="none" stroke="#111" strokeWidth="3.4"><circle cx="13" cy="13" r="10.5" /></svg>
          <SearchText>Type here to search</SearchText>
          <svg width="16" height="24" viewBox="0 0 16 24" fill="none" stroke="#333" strokeWidth="1.5"><rect x="4.5" y="1" width="7" height="14" rx="3" fill="#777" /><path d="M1.5 10v3c0 3 3 5 6.5 5s6.5-2 6.5-5v-3M8 18v4M4 23h8" /></svg>
        </SearchBox>
        <TaskSlot>
          <svg width="18" height="24" viewBox="0 0 18 24" fill="none" stroke="#f0f0f0" strokeWidth="1.4"><path d="M0 1h11M0 22h11M0 6h13v12H0M16 5v2M16 11v2M16 17v2" /></svg>
        </TaskSlot>
        <TaskSlot>
          <svg width="27" height="28" viewBox="0 0 27 28" fill="#0c74d0"><path d="M1 15C1 6 7 0 15 0c7 0 12 5 12 13v3H9c0 5 4 7 8 7 3 0 6-1 8-2v5c-2 1-6 2-10 2C6 28 1 23 1 15Zm8-4h10c0-3-2-5-5-5s-5 2-5 5Z" fillRule="evenodd" /></svg>
        </TaskSlot>
        <TaskSlot $line="#76b9ed">
          <svg width="28" height="28" viewBox="0 0 28 28"><path d="M0 3h12l2 3h14v22H0Z" fill="#f4cf6a" /><path d="M0 3h12v5H0Z" fill="#fff1b8" /><path d="M9 14h10v4h3v10H6V18h3Z" fill="#36a2d8" /><rect x="12" y="22" width="4" height="6" fill="#f4cf6a" /></svg>
        </TaskSlot>
        <TaskSlot><AdobeTile $c="#7fb6d8" $bg="#0f2a3c">Lr</AdobeTile></TaskSlot>
        <TaskSlot><AdobeTile $c="#8fc3f0" $bg="#0c1f45">Ps</AdobeTile></TaskSlot>
        <TaskSlot $bg="#53585b" $line="#76b9ed" $full><AdobeTile $c="#e8821e" $bg="#2a1404" $glow>Ai</AdobeTile></TaskSlot>
        <TaskSlot><AdobeTile $c="#bd93ec" $bg="#1c0a3a">Ae</AdobeTile></TaskSlot>
        <TaskSlot $line="#76b9ed">
          <svg width="28" height="28" viewBox="0 0 28 28">
            <path d="M14 14 26.1 7A14 14 0 0 0 2.7 5.7Z" fill="#db4437" />
            <path d="M14 14 2.7 5.7A14 14 0 0 0 12 27.9Z" fill="#0f9d58" />
            <path d="M14 14 12 27.9A14 14 0 0 0 26.1 7Z" fill="#f4c20d" />
            <circle cx="14" cy="14" r="6.5" fill="#fff" /><circle cx="14" cy="14" r="5" fill="#4285f4" />
          </svg>
        </TaskSlot>
        <TaskSlot>
          <svg width="28" height="28" viewBox="0 0 28 28"><circle cx="14" cy="14" r="14" fill="#2a9ad4" /><path d="M5 14 22 7 19 21 14 18 12 21 11 16 19 10 9 15.5Z" fill="#eaf5fb" /></svg>
        </TaskSlot>
        <TaskSlot $bg="linear-gradient(90deg, #73722f 66%, #2e3133 66%)" $line="#ffec00" $full>
          <svg width="30" height="26" viewBox="0 0 30 26"><path d="M0 0 15 13 0 26Z" fill="#6b4bb5" /><path d="M0 0 15 13H4Z" fill="#d8cdf2" /><path d="M30 0 15 13 30 26Z" fill="#dcdce4" /><path d="M30 26 15 13H26Z" fill="#a9a9b8" /></svg>
        </TaskSlot>
        <TaskSlot $line="#76b9ed">
          <svg width="24" height="32" viewBox="0 0 24 32"><defs><linearGradient id="pn" x1="0" x2="1" y1="0" y2="1"><stop offset="0" stopColor="#2ec4d6" /><stop offset=".5" stopColor="#b158d8" /><stop offset="1" stopColor="#f0502c" /></linearGradient></defs><path d="M12 0C19 0 24 6 24 13c0 7-6 11-8 13l-3 6c-1-3 0-5-2-7C6 22 0 19 0 12 0 5 5 0 12 0Z" fill="url(#pn)" /></svg>
        </TaskSlot>
        <TaskSlot $line="#76b9ed">
          <svg width="27" height="30" viewBox="0 0 27 30" fill="none"><path d="M0 2 13.5 0 27 2V18C27 24 19 28 13.5 30 8 28 0 24 0 18Z" fill="#3aa0e8" /><circle cx="13.5" cy="14" r="6.5" stroke="#e7f4fd" strokeWidth="2" strokeDasharray="28 12" /></svg>
        </TaskSlot>
        <TaskSlot $line="#76b9ed">
          <WordIcon>
            <WordLetter>W</WordLetter>
            <svg width="9" height="17" viewBox="0 0 9 17" fill="#fff"><path d="M0 0h9v2H0zM0 3h9v2H0zM0 6h9v2H0zM0 9h9v2H0zM0 12h9v2H0zM0 15h9v2H0z" /></svg>
          </WordIcon>
        </TaskSlot>
        <TaskSlot $line="#76b9ed">
          <svg width="30" height="32" viewBox="0 0 30 32" fill="none"><ellipse cx="14" cy="11" rx="13" ry="9" transform="rotate(-30 14 11)" fill="#e5e5e5" stroke="#d0312d" strokeWidth="1.5" /><ellipse cx="9" cy="20" rx="8" ry="4" fill="#8b7d7d" /><path d="M8 8 18 18M16 5 14 17" stroke="#888" strokeWidth="2" /><circle cx="25" cy="21" r="4" stroke="#2e8bd0" strokeWidth="2" /><ellipse cx="20" cy="27" rx="3" ry="4" stroke="#2e8bd0" strokeWidth="2" /></svg>
        </TaskSlot>
        <Tray>
          <TrayItem $ml={0}>
            <svg width="17" height="20" viewBox="0 0 17 20" fill="none" stroke="#e8e8e8" strokeWidth="1.2"><circle cx="5.5" cy="8" r="3" /><path d="M.5 19c0-4 2-7 5-7s5 3 5 7" /><circle cx="12" cy="4" r="3" /><path d="M10 8c3-.5 6 2 6 7" /></svg>
          </TrayItem>
          <TrayItem $ml={30}>
            <svg width="16" height="9" viewBox="0 0 16 9" fill="none" stroke="#eee" strokeWidth="1.3"><path d="M1 8.5 8 1.5 15 8.5" /></svg>
          </TrayItem>
          <TrayItem $ml={14}>
            <svg width="18" height="24" viewBox="0 0 18 24"><path d="M1 3 9 0 16 3V11C16 16 12 19 8.5 21 5 19 1 16 1 11Z" fill="#eee" /><path d="M8 0h1.500v21H8ZM1 9h15v1.500H1Z" fill="#151719" /><circle cx="12.5" cy="17" r="5.5" fill="#1f9f4e" /><path d="M10 17 12 19 15 15" stroke="#fff" strokeWidth="1.2" fill="none" /></svg>
          </TrayItem>
          <TrayItem $ml={13}>
            <svg width="18" height="18" viewBox="0 0 18 18" fill="none" stroke="#bbb" strokeWidth="1"><path d="M1 17C1 9 6 3 17 1M5 17C5 11 9 7 16 5M9 17c0-3 2-5 6-7" strokeDasharray="1.5 1" /><circle cx="13" cy="15" r="1.2" fill="#ddd" /></svg>
          </TrayItem>
          <TrayItem $ml={11}>
            <svg width="20" height="18" viewBox="0 0 20 18" fill="none" stroke="#d8d8d8"><path d="M1 6H5L10 1V17L5 12H1Z" /><path d="M13 5C15 7 15 11 13 13M16 3C19 6 19 12 16 15" stroke="#999" /></svg>
          </TrayItem>
          <ClockColumn $ml={18} $w={14}><span>فا</span><span>FA</span></ClockColumn>
          <ClockColumn $ml={19} $w={74}><span>05:05 ب.ظ</span><span>۲۰۱۸/۱۲/۰۱</span></ClockColumn>
          <NotifyButton>
            <svg width="20" height="24" viewBox="0 0 20 24" fill="#f2f2f2"><path d="M0 0H20V18H8L4 22V18H0ZM4 5H16V6.5H4ZM4 9H16V10.5H4ZM4 13H12V14.5H4Z" fillRule="evenodd" /></svg>
            <NotifyBadge>1</NotifyBadge>
          </NotifyButton>
        </Tray>
      </Taskbar>
    </Page>
  );
}
